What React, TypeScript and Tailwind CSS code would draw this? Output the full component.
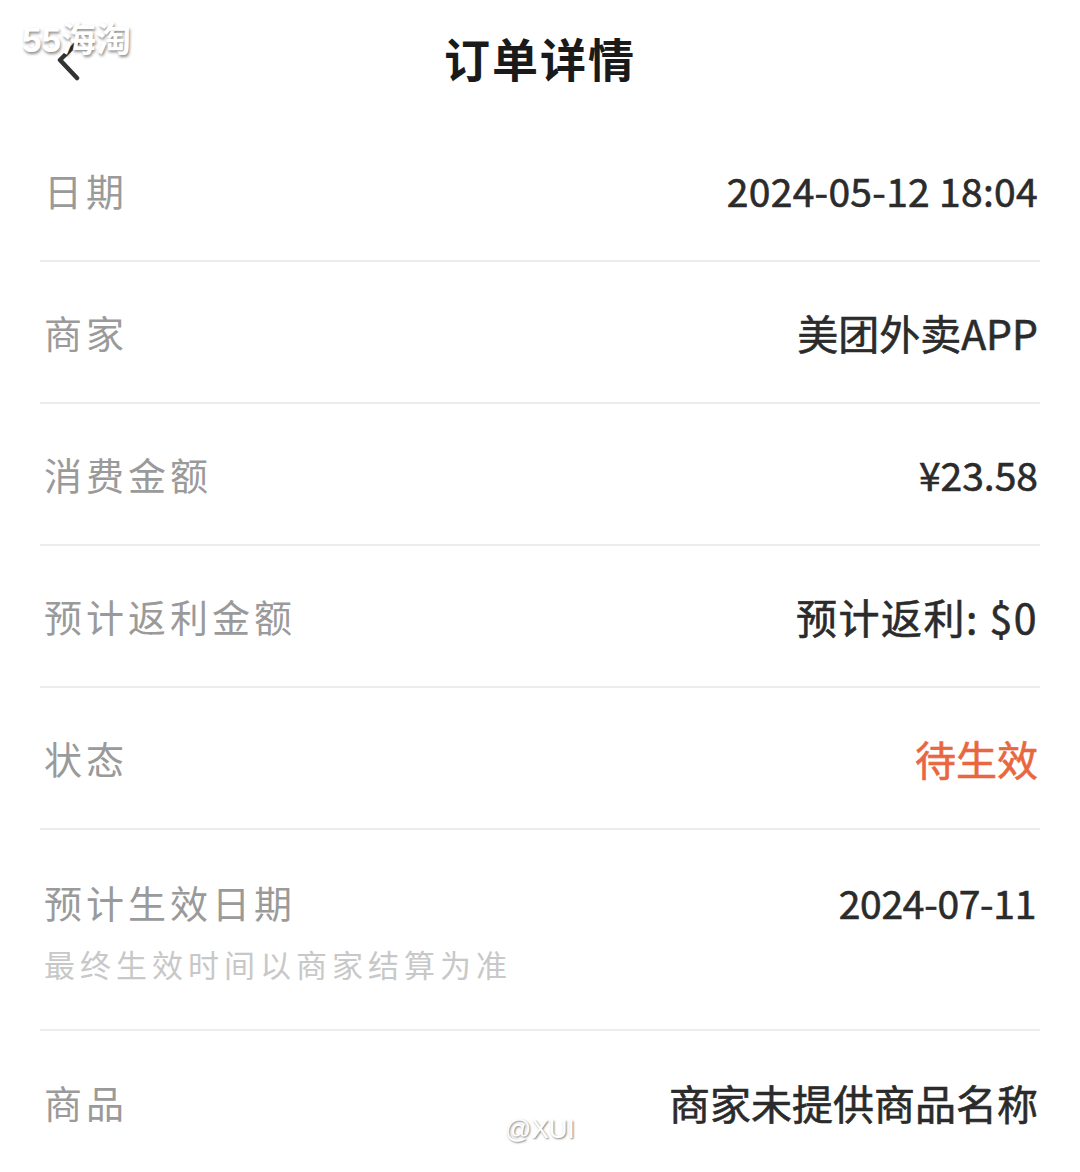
import React from "react";

const FONT = '"Noto Sans CJK SC", "Noto Sans", sans-serif';

function Row({ label, value, valueClass = "text-[41px] text-[#2b2b2b]", last = false }: { label: string; value: string; valueClass?: string; last?: boolean }) {
  return (
    <div className={`flex h-[142px] items-center justify-between pl-[4px] pr-[2px] ${last ? "" : "border-b-2 border-[#ececec]"}`}>
      <span className="text-[38px] leading-[48px] tracking-[4px] text-[#9a9a9a]">{label}</span>
      <span className={`leading-[48px] font-normal [-webkit-text-stroke:0.6px_currentColor] ${valueClass}`}>{value}</span>
    </div>
  );
}

export default function App() {
  return (
    <div className="relative w-[1080px] h-[1172px] overflow-hidden bg-white" style={{ fontFamily: FONT }}>
      {/* header */}
      <div className="relative h-[120px] grid grid-cols-[1fr_auto_1fr] items-start pt-[28px]">
        <div className="pl-[56px] pt-[12px]">
          <svg width="26" height="42" viewBox="0 0 26 42" fill="none">
            <path d="M21 3 L4 20 L21 38" stroke="#333333" strokeWidth="4.5" strokeLinecap="round" strokeLinejoin="round" />
          </svg>
        </div>
        <h1 className="text-[46px] leading-[58px] font-bold text-[#1a1a1a] tracking-[2px]">订单详情</h1>
        <div />
      </div>

      {/* content */}
      <div className="px-[40px]">
        <Row label="日期" value="2024-05-12 18:04" valueClass="text-[39px] tracking-[0.3px] text-[#2b2b2b]" />
        <Row label="商家" value="美团外卖APP" />
        <Row label="消费金额" value="¥23.58" valueClass="text-[39px] text-[#2b2b2b]" />
        <Row label="预计返利金额" value="预计返利: $0" valueClass="text-[41px] tracking-[1.5px] text-[#2b2b2b]" />
        <Row label="状态" value="待生效" valueClass="text-[41px] text-[#e9673f]" />
        <div className="flex h-[201px] items-start justify-between pt-[48px] pl-[4px] pr-[4px] border-b-2 border-[#ececec]">
          <div className="flex flex-col">
            <span className="text-[38px] leading-[48px] tracking-[4px] text-[#9a9a9a]">预计生效日期</span>
            <span className="mt-[18px] text-[31px] leading-[40px] tracking-[5px] text-[#c8c8c8]">最终生效时间以商家结算为准</span>
          </div>
          <span className="text-[39px] leading-[48px] font-normal tracking-[-0.3px] text-[#2b2b2b] [-webkit-text-stroke:0.6px_currentColor]">2024-07-11</span>
        </div>
        <Row label="商品" value="商家未提供商品名称" last />
      </div>

      {/* watermarks */}
      <div className="absolute left-[22px] top-[18px] text-[35px] leading-[44px] font-bold text-white [text-shadow:1px_2px_3px_rgba(0,0,0,0.45)]" style={{ fontFamily: '"Liberation Sans", "Noto Sans CJK SC", sans-serif' }}>
        55海淘
      </div>
      <div className="absolute left-[505px] top-[1112px] text-[26px] leading-[34px] text-white [text-shadow:1px_1px_2px_rgba(0,0,0,0.5)]" style={{ fontFamily: '"Liberation Sans", sans-serif' }}>
        @XUI
      </div>
    </div>
  );
}
